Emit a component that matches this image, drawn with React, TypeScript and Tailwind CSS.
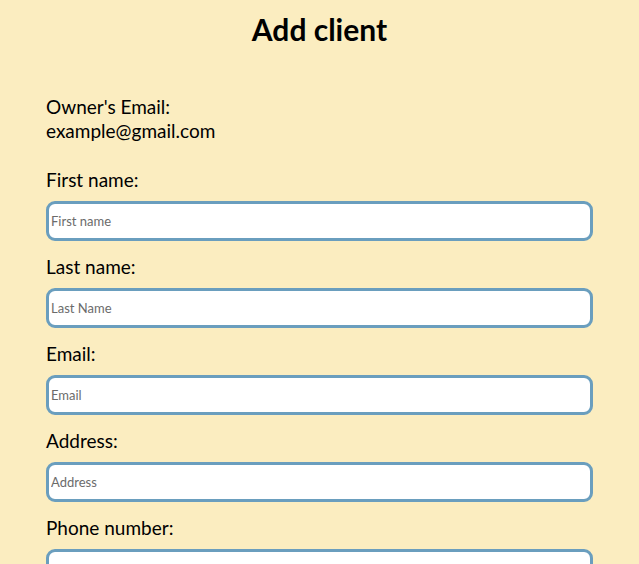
export default function App() {
  const fields = [
    { label: "First name:", placeholder: "First name" },
    { label: "Last name:", placeholder: "Last Name" },
    { label: "Email:", placeholder: "Email" },
    { label: "Address:", placeholder: "Address" },
    { label: "Phone number:", placeholder: "" },
  ];

  return (
    <div
      className="min-h-[564px] bg-[#fbedc0] text-black"
      style={{ fontFamily: "Lato, 'Open Sans', sans-serif" }}
    >
      <h1 className="pt-[11px] text-center text-[30px] font-bold leading-[36px]">Add client</h1>

      <div className="px-[46px] pt-[48px]">
        <div className="text-[19px] leading-[24px]">
          <p>Owner's Email:</p>
          <p>example@gmail.com</p>
        </div>

        <form className="mt-[25px]">
          {fields.map((f) => (
            <div key={f.label} className="mb-[14px]">
              <label className="block text-[19px] leading-[24px] mb-[9px]">{f.label}</label>
              <input
                placeholder={f.placeholder}
                className="w-full h-[40px] px-[2px] bg-white border-[3px] border-[#6a9ebe] rounded-[9px] text-[13px] placeholder:text-[#6b6b6b] outline-none"
              />
            </div>
          ))}
        </form>
      </div>
    </div>
  );
}
